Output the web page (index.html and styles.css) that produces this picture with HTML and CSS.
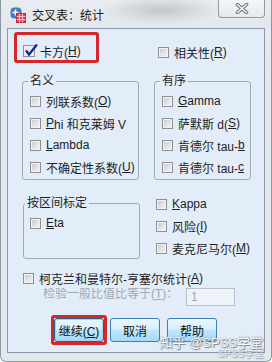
FILE: index.html
```html
<!doctype html>
<html lang="zh">
<head>
    <meta charset="UTF-8">
    <title>交叉表：统计</title>
    <link rel="stylesheet" href="styles.css">
</head>
<body>
<div class="window">
    <div class="titlebar">
        <svg class="app-icon" width="16" height="16" viewBox="0 0 16 16">
            <rect x="0.5" y="0.5" width="11" height="11" rx="4" fill="#3f7cc0"/>
            <path d="M2.5 5.5h6M5.5 2.5v6" stroke="#fff" stroke-width="1.6"/>
            <rect x="6.5" y="6.5" width="9" height="9" fill="#e2495b" stroke="#b5263a"/>
            <path d="M6.5 9.5h9M6.5 12.5h9M9.5 6.5v9M12.5 6.5v9" stroke="#fbd0d6" stroke-width="0.8"/>
        </svg>
        <span class="title">交叉表：统计</span>
        <div class="close-btn">
            <svg width="14" height="11" viewBox="0 0 14 11">
                <path d="M2.5 1.5L11.5 9.5M11.5 1.5L2.5 9.5" stroke="#6f757c" stroke-width="3.6" stroke-linecap="round"/>
                <path d="M2.5 1.5L11.5 9.5M11.5 1.5L2.5 9.5" stroke="#f3f4f5" stroke-width="1.6" stroke-linecap="round"/>
            </svg>
        </div>
    </div>

    <div class="client">
        <div class="cols top">
            <div class="highlight">
                <label class="check">
                    <span class="box checked">
                        <svg width="15" height="14" viewBox="0 0 15 14">
                            <path d="M2 7.5L5 11.5L13 1.5" fill="none" stroke="#1b2b8f" stroke-width="2.3"/>
                        </svg>
                    </span>卡方(<u>H</u>)
                </label>
            </div>
            <label class="check corr"><span class="box"></span>相关性(<u>R</u>)</label>
        </div>

        <div class="cols groups">
            <fieldset class="group">
                <legend>名义</legend>
                <label class="check row"><span class="box"></span>列联系数(<u>O</u>)</label>
                <label class="check row"><span class="box"></span><u>P</u>hi 和克莱姆 V</label>
                <label class="check row"><span class="box"></span><u>L</u>ambda</label>
                <label class="check row"><span class="box"></span>不确定性系数(<u>U</u>)</label>
            </fieldset>
            <fieldset class="group">
                <legend>有序</legend>
                <label class="check row"><span class="box"></span><u>G</u>amma</label>
                <label class="check row"><span class="box"></span>萨默斯 d(<u>S</u>)</label>
                <label class="check row"><span class="box"></span>肯德尔 tau-<u>b</u></label>
                <label class="check row"><span class="box"></span>肯德尔 tau-<u>c</u></label>
            </fieldset>
        </div>

        <div class="cols groups-2">
            <fieldset class="group interval">
                <legend>按区间标定</legend>
                <label class="check row"><span class="box"></span><u>E</u>ta</label>
            </fieldset>
            <div class="list">
                <label class="check row"><span class="box"></span><u>K</u>appa</label>
                <label class="check row"><span class="box"></span>风险(<u>I</u>)</label>
                <label class="check row"><span class="box"></span>麦克尼马尔(<u>M</u>)</label>
            </div>
        </div>

        <label class="check cmh"><span class="box"></span>柯克兰和曼特尔-亨塞尔统计(<u>A</u>)</label>
        <div class="odds">
            <span class="odds-label">检验一般比值比等于(<u>T</u>)：</span>
            <span class="field">1</span>
        </div>

        <div class="buttons">
            <span class="focus-mark"><button class="btn default">继续(<u>C</u>)</button></span>
            <button class="btn cancel">取消</button>
            <button class="btn help">帮助</button>
        </div>
    </div>

    <div class="watermark">知乎 @SPSS学堂</div>
    <div class="watermark small">SPSS学堂</div>
</div>
</body>
</html>
```

FILE: styles.css
```css
body {
    margin: 0;
    font-family: "Liberation Sans", "Noto Sans CJK SC", sans-serif;
    font-size: 12px;
    color: #1e1e1e;
}

.window {
    position: relative;
    width: 272px;
    height: 362px;
    box-sizing: border-box;
    display: flex;
    flex-direction: column;
    border-left: 1px solid #8d98a3;
    border-right: 1px solid #8d98a3;
    border-bottom: 1px solid #8d98a3;
    border-radius: 0 0 6px 6px;
    background: linear-gradient(180deg, #e6eaee 0%, #e3e8ed 100%);
}

.titlebar {
    height: 28px;
    flex-shrink: 0;
    display: flex;
    align-items: center;
    padding-left: 9px;
    background:
        radial-gradient(ellipse 60px 14px at 160px 10px, rgba(150, 156, 162, 0.45), rgba(150, 156, 162, 0)),
        linear-gradient(180deg, #e9edf1 0%, #e2e7ec 100%);
}

.app-icon {
    display: block;
    margin-top: 2px;
}

.title {
    margin-left: 6px;
    color: #1a1a1a;
}

.close-btn {
    align-self: flex-start;
    margin-left: auto;
    margin-right: 6px;
    width: 47px;
    height: 18px;
    box-sizing: border-box;
    border: 1px solid #8f9ba7;
    border-top: none;
    border-radius: 0 0 4px 4px;
    background: linear-gradient(180deg, #f4f6f8 0%, #e6eaee 100%);
    display: flex;
    align-items: center;
    justify-content: center;
}

.close-btn svg {
    display: block;
}

.client {
    flex: 1;
    margin: 0 6px 8px 6px;
    border: 1px solid #8b9aab;
    background: #e2edf9;
    padding: 3px 0 0 14px;
}

.cols {
    display: grid;
    grid-template-columns: 117px 97px;
    column-gap: 15px;
}

.check {
    display: flex;
    align-items: center;
    height: 16px;
    white-space: nowrap;
}

.check.row {
    height: 22px;
}

.box {
    position: relative;
    flex-shrink: 0;
    width: 11px;
    height: 11px;
    box-sizing: border-box;
    margin-right: 5px;
    border: 1px solid #8f9091;
    background: linear-gradient(135deg, #c6c9cd 0%, #e4e6e8 60%, #f3f4f5 100%);
    box-shadow: inset 0 0 0 1px #f1f2f3;
}

.box.checked {
    width: 12px;
    height: 12px;
    background: linear-gradient(135deg, #dfe2e6 0%, #f7f8f9 100%);
}

.box.checked svg {
    position: absolute;
    left: 0;
    top: -3px;
}

.highlight {
    margin-left: -8px;
    width: 85px;
    height: 31px;
    box-sizing: border-box;
    border: 3px solid #d7262a;
    border-radius: 3px;
    padding: 8px 0 0 6px;
}

.corr {
    margin-top: 12px;
    padding-left: 4px;
}

.groups {
    margin-top: 11px;
}

.group {
    margin: 0;
    min-width: 0;
    padding: 2px 4px 1px 7px;
    border: 1px solid #9ea9b4;
    border-radius: 3px;
}

.group legend {
    padding: 0 2px;
    margin-left: -2px;
    line-height: 14px;
}

.groups-2 {
    margin-top: 13px;
}

.interval {
    width: 117px;
    box-sizing: border-box;
    margin: 3px 0 0 1px;
    padding: 2px 4px 24px 6px;
}

.interval legend {
    margin-left: -5px;
}

.list {
    padding-left: 2px;
}

.cmh {
    margin: 11px 0 0 1px;
}

.odds {
    display: flex;
    margin-top: 2px;
}

.odds-label {
    width: 164px;
    flex-shrink: 0;
    box-sizing: border-box;
    padding: 0 0 0 21px;
    line-height: 12px;
    color: #a2a8ae;
    white-space: nowrap;
    overflow: hidden;
}

.field {
    width: 49px;
    height: 18px;
    box-sizing: border-box;
    border: 1px solid #b8c2cc;
    background: #edf3f9;
    color: #a2a8ae;
    padding-left: 4px;
    line-height: 16px;
}

.buttons {
    display: flex;
    align-items: center;
    margin: 9px 0 0 29px;
}

.focus-mark {
    display: flex;
    border: 3px solid #d7262a;
    border-radius: 3px;
}

.btn {
    width: 50px;
    height: 24px;
    padding: 0;
    border: 1px solid #3c7fb1;
    border-radius: 3px;
    background: linear-gradient(180deg, #eaf6fd 0%, #d9f0fc 45%, #bee6fd 50%, #a7d9f5 100%);
    font-family: "Liberation Sans", "Noto Sans CJK SC", sans-serif;
    font-size: 12px;
    color: #111;
}

.btn.default {
    border-color: #2c5f87;
    box-shadow: inset 0 0 0 1px #9fd3f2;
}

.btn.cancel {
    margin-left: 3px;
}

.btn.help {
    margin-left: 7px;
}

.watermark {
    position: absolute;
    right: 8px;
    bottom: 12px;
    font-size: 13px;
    line-height: 13px;
    color: #ffffff;
    text-shadow: 0 0 1px #5a5f66, 1px 1px 1px #6d7278;
    opacity: 0.9;
    white-space: nowrap;
}

.watermark.small {
    bottom: 2px;
    right: 7px;
    font-size: 10px;
    line-height: 10px;
    opacity: 0.6;
}
```
